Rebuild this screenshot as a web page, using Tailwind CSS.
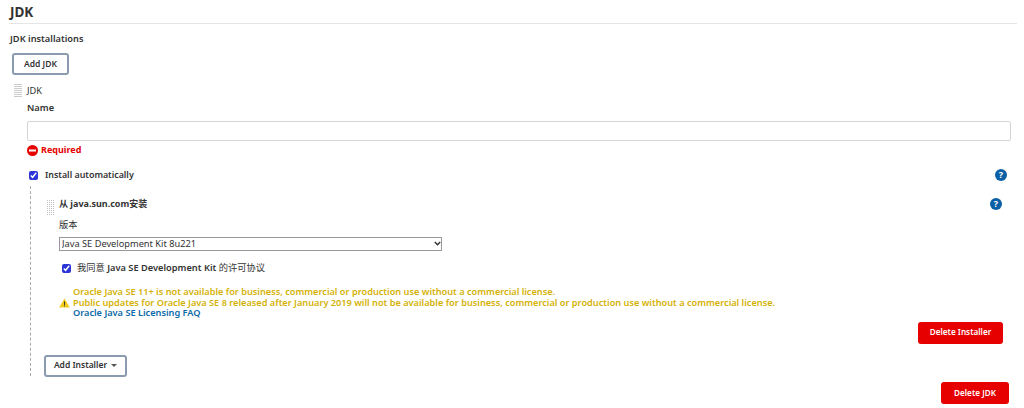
<!DOCTYPE html>
<html><head><meta charset="utf-8"><script src="https://cdn.jsdelivr.net/npm/@tailwindcss/browser@4"></script></head>
<body class="bg-white">
<div class="w-[1024px] h-[408px] overflow-hidden pl-[9px] pr-[13px] text-[#333] text-[9.25px] font-['Noto_Sans','Noto_Sans_CJK_SC',sans-serif]">
  <h2 class="h-[24px] pt-[3px] pl-[1px] -mr-[6px] border-b border-[#e5e5e5] text-[13.5px] leading-[18px] font-bold">JDK</h2>
  <div class="mt-[8px] pl-[1px] h-[14px] leading-[14px] font-semibold">JDK installations</div>
  <button class="block mt-[7px] ml-[3px] w-[57px] h-[22px] border-2 border-[#8a9bb0] rounded-[3px] text-[8.5px] font-semibold text-[#333]">Add JDK</button>
  <div class="flex mt-[9px] ml-[5px]">
    <div class="w-[8px] h-[14px] bg-[repeating-linear-gradient(#ccc_0,#ccc_1px,#fff_1px,#fff_2px)]"></div>
    <div class="flex-1 ml-[5px]">
      <div class="h-[14px] leading-[14px]">JDK</div>
      <div class="mt-[3px] h-[14px] leading-[14px] font-semibold">Name</div>
      <div class="mt-[6px] h-[20px] border border-[#d5d5d5] rounded-[2px]"></div>
      <div class="flex items-center gap-[3px] mt-[2px] h-[14px] text-[#e60000] text-[9px] font-bold">
        <svg width="11" height="11" viewBox="0 0 11 11"><circle cx="5.5" cy="5.5" r="5.5" fill="#e60000"/><rect x="2" y="4.5" width="7" height="2" fill="#fff"/></svg>
        <span>Required</span>
      </div>
      <div class="flex items-center mt-[11px] h-[14px] pl-[2px]">
        <input type="checkbox" checked class="w-[9px] h-[9px] accent-[#2b35d8]">
        <span class="ml-[7px] text-[8.9px] font-semibold">Install automatically</span>
        <svg class="ml-auto mr-[4px]" width="12" height="12" viewBox="0 0 12 12"><circle cx="6" cy="6" r="6" fill="#0b5fa5"/><text x="6" y="9" text-anchor="middle" font-size="9" font-weight="700" fill="#fff" font-family="Noto Sans">?</text></svg>
      </div>
      <div class="mt-[4px] ml-[3px] h-[190px] border-l border-dashed border-[#aaa] pl-[14px]">
        <div class="flex">
          <div class="w-[8px] h-[16px] mt-[13px] ml-[1px] bg-[repeating-linear-gradient(#fff_0,#fff_1px,transparent_1px,transparent_2px),repeating-linear-gradient(90deg,#fff_0,#fff_1px,#c4c4c4_1px,#c4c4c4_2px)]"></div>
          <div class="flex-1 ml-[5px]">
            <div class="flex items-center h-[14px] mt-[11px] text-[9px] font-bold">
              <span>从 java.sun.com安装</span>
              <svg class="ml-auto mr-[9px]" width="12" height="12" viewBox="0 0 12 12"><circle cx="6" cy="6" r="6" fill="#0b5fa5"/><text x="6" y="9" text-anchor="middle" font-size="9" font-weight="700" fill="#fff" font-family="Noto Sans">?</text></svg>
            </div>
            <div class="mt-[7px] h-[14px] leading-[14px]">版本</div>
            <div class="relative mt-[5px] w-[383px] h-[14px]">
              <select class="block appearance-none w-full h-full border border-[#999] text-[9.25px] leading-[12px] py-0 pl-[2px]"><option>Java SE Development Kit 8u221</option></select>
              <svg class="absolute right-[1px] top-[4px]" width="7" height="5" viewBox="0 0 7 5"><path d="M0.8 1 3.5 3.7 6.2 1" fill="none" stroke="#333" stroke-width="1.5"/></svg>
            </div>
            <div class="flex items-center mt-[10px] h-[14px] pl-[3px]">
              <input type="checkbox" checked class="w-[9px] h-[9px] accent-[#2b35d8]">
              <span class="ml-[6px]">我同意 <span class="font-semibold">Java SE Development Kit</span> 的许可协议</span>
            </div>
            <div class="flex items-center mt-[12px] text-[9.2px] text-[#d4b106] font-semibold">
              <svg width="11" height="10" viewBox="0 0 11 10"><path d="M5.5 0.5 10.8 9.6H0.2Z" fill="#f2cb1d"/><rect x="5" y="3.5" width="1" height="3.4" fill="#333"/><rect x="5" y="7.5" width="1" height="1" fill="#333"/></svg>
              <div class="ml-[3px] leading-[10.5px]">
                <div>Oracle Java SE 11+ is not available for business, commercial or production use without a commercial license.</div>
                <div>Public updates for Oracle Java SE 8 released after January 2019 will not be available for business, commercial or production use without a commercial license.</div>
                <a class="block text-[#0b6aa8]">Oracle Java SE Licensing FAQ</a>
              </div>
            </div>
            <div class="flex justify-end mt-[3px] pr-[8px]">
              <button class="w-[85px] h-[22px] bg-[#e60000] rounded-[3px] text-white text-[8.2px] font-semibold">Delete Installer</button>
            </div>
          </div>
        </div>
        <button class="flex items-center justify-center gap-[4px] mt-[11px] -ml-[1px] w-[83px] h-[22px] border-2 border-[#8a9bb0] rounded-[3px] text-[8.5px] font-semibold">Add Installer <span class="w-0 h-0 border-x-[3px] border-x-transparent border-t-[3px] border-t-[#555]"></span></button>
      </div>
      <div class="flex justify-end mt-[6px] pr-[2px]">
        <button class="w-[68px] h-[22px] bg-[#e60000] rounded-[3px] text-white text-[8.2px] font-semibold">Delete JDK</button>
      </div>
    </div>
  </div>
</div>
</body></html>
